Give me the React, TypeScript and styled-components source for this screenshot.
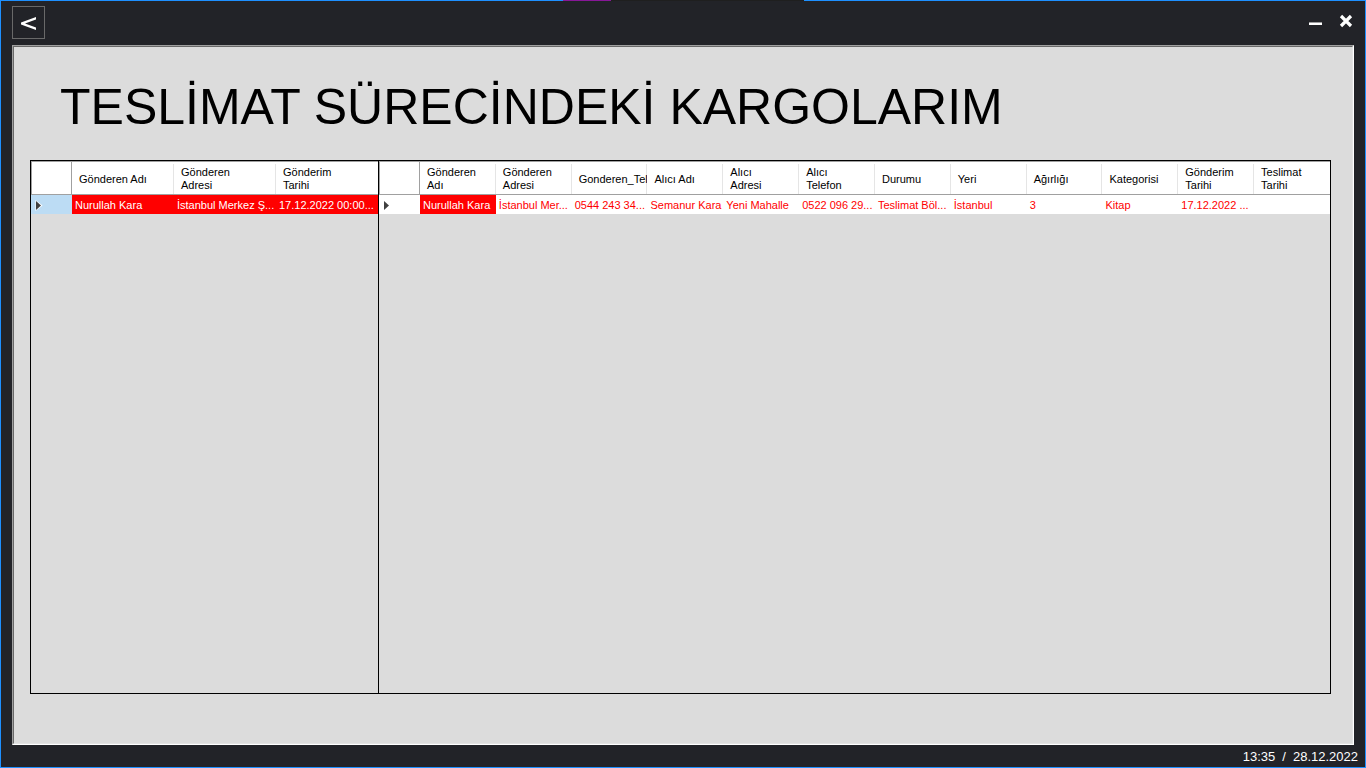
import React from "react";
import styled, { createGlobalStyle } from "styled-components";

const GlobalStyle = createGlobalStyle`
  * { box-sizing: border-box; }
  body {
    margin: 0;
    background: #222328;
    font-family: "Liberation Sans", Arial, sans-serif;
  }
`;

const Window = styled.div`
  display: flex;
  flex-direction: column;
  min-height: 100vh;
  background: #222328;
  border: 1px solid #1e90ff;
  border-top: 0;
`;

const AccentLine = styled.div`
  height: 1px;
  background: linear-gradient(
    to right,
    #1e90ff 41.2%,
    #881798 41.2% 44.7%,
    #1f1f1f 44.7% 58.9%,
    #1e90ff 58.9%
  );
`;

const TitleBar = styled.header`
  display: flex;
  justify-content: space-between;
  align-items: flex-start;
  height: 44px;
  padding: 5px 9px 0 11px;
`;

const BackButton = styled.button`
  display: flex;
  align-items: center;
  justify-content: center;
  width: 33px;
  height: 33px;
  padding: 2px 0 0;
  background: #222328;
  border: 1px solid #696969;
`;

const WindowControls = styled.div`
  display: flex;
  gap: 10px;
  padding-top: 5px;
`;

const ControlButton = styled.button`
  width: 20px;
  height: 20px;
  padding: 0;
  background: transparent;
  border: 0;

  svg { display: block; }
`;

const Panel = styled.main`
  flex: 1;
  display: flex;
  flex-direction: column;
  margin: 0 11px;
  background: #dcdcdc;
  border: 1px solid;
  border-color: #a0a0a0 #ffffff #ffffff #a0a0a0;
`;

const PanelInner = styled.div`
  flex: 1;
  display: flex;
  flex-direction: column;
  padding: 32px 21px 49px 16px;
  border: 1px solid;
  border-color: #696969 #e3e3e3 #e3e3e3 #696969;
`;

const Title = styled.h1`
  margin: 0;
  padding-left: 30px;
  height: 81px;
  font-size: 50px;
  line-height: 56px;
  font-weight: 400;
  color: #000;
  white-space: nowrap;
`;

const Grids = styled.div`
  flex: 1;
  display: grid;
  grid-template-columns: 347fr 952fr;
  border: 1px solid #000;
`;

const GridPane = styled.section`
  min-width: 0;

  & + & { border-left: 1px solid #000; }
`;

const Table = styled.table`
  width: 100%;
  table-layout: fixed;
  border-spacing: 0;
  font-size: 11px;
  line-height: 13px;
`;

const HeadCell = styled.th`
  height: 34px;
  padding: 2px 0 0 7px;
  overflow: hidden;
  text-align: left;
  font-weight: 400;
  color: #000;
  background: linear-gradient(#e5e5e5, #e5e5e5) right 2px / 1px 100% no-repeat #fff;
  border-top: 1px solid #a0a0a0;
  border-bottom: 1px solid #a0a0a0;
  white-space: pre;

  &:last-child { background: #fff; }
`;

const CornerCell = styled.td`
  width: 41px;
  background: #fff;
  border: 1px solid #a0a0a0;
`;

const RowMarker = styled.th<{ $active?: boolean }>`
  height: 19px;
  padding: 1px 0 0 4px;
  background: ${(p) => (p.$active ? "#bcdcf4" : "#fff")};

  svg { display: block; }
`;

const Cell = styled.td<{ $selected?: boolean }>`
  height: 19px;
  padding: 1px 0 0 3px;
  overflow: hidden;
  white-space: nowrap;
  color: ${(p) => (p.$selected ? "#fff" : "#f00")};
  background: ${(p) => (p.$selected ? "#f00" : "#fff")};
`;

const StatusBar = styled.footer`
  display: flex;
  justify-content: flex-end;
  gap: 7px;
  height: 22px;
  padding: 4px 7px 0;
  font-size: 13px;
  line-height: 16px;
  color: #fff;
`;

type GridProps = {
  label: string;
  columns: string[];
  values: string[];
  selectedCount: number;
  active?: boolean;
};

function DataGrid({ label, columns, values, selectedCount, active }: GridProps) {
  return (
    <GridPane>
      <Table aria-label={label}>
        <thead>
          <tr>
            <CornerCell />
            {columns.map((c) => (
              <HeadCell key={c} scope="col">{c}</HeadCell>
            ))}
          </tr>
        </thead>
        <tbody>
          <tr>
            <RowMarker scope="row" $active={active} aria-label="Seçili satır">
              <svg width="8" height="11" viewBox="0 0 8 11">
                <path d="M0.5 0 L7.5 5.5 L0.5 11 Z" fill="#fff" />
                <path d="M1 1 L6 5.5 L1 10 Z" fill="#404040" />
              </svg>
            </RowMarker>
            {values.map((v, i) => (
              <Cell key={columns[i]} $selected={i < selectedCount}>{v}</Cell>
            ))}
          </tr>
        </tbody>
      </Table>
    </GridPane>
  );
}

export default function App() {
  return (
    <>
      <GlobalStyle />
      <Window>
        <AccentLine />
        <TitleBar>
          <BackButton aria-label="Geri">
            <svg width="17" height="15" viewBox="0 0 17 15">
              <path d="M16 1 V3.4 L5 7.5 L16 11.6 V14 L1 8.4 V6.6 Z" fill="#fff" />
            </svg>
          </BackButton>
          <WindowControls>
            <ControlButton aria-label="Simge durumuna küçült">
              <svg width="20" height="20" viewBox="0 0 20 20">
                <path d="M3 11h13v1H3z" fill="#9a9a9c" />
                <path d="M3 12h13v2H3z" fill="#fff" />
              </svg>
            </ControlButton>
            <ControlButton aria-label="Kapat">
              <svg width="20" height="20" viewBox="0 0 20 20">
                <path d="M5 5 L15 15 M15 5 L5 15" stroke="#fff" strokeWidth="3.2" />
              </svg>
            </ControlButton>
          </WindowControls>
        </TitleBar>
        <Panel>
          <PanelInner>
            <Title>TESLİMAT SÜRECİNDEKİ KARGOLARIM</Title>
            <Grids>
              <DataGrid
                label="Gönderiler"
                active
                selectedCount={3}
                columns={["Gönderen Adı", "Gönderen\nAdresi", "Gönderim\nTarihi"]}
                values={["Nurullah Kara", "İstanbul Merkez Ş...", "17.12.2022 00:00..."]}
              />
              <DataGrid
                label="Kargo ayrıntıları"
                selectedCount={1}
                columns={[
                  "Gönderen\nAdı", "Gönderen\nAdresi", "Gonderen_Tel", "Alıcı Adı",
                  "Alıcı\nAdresi", "Alıcı\nTelefon", "Durumu", "Yeri", "Ağırlığı",
                  "Kategorisi", "Gönderim\nTarihi", "Teslimat\nTarihi",
                ]}
                values={[
                  "Nurullah Kara", "İstanbul Mer...", "0544 243 34...", "Semanur Kara",
                  "Yeni Mahalle", "0522 096 29...", "Teslimat Böl...", "İstanbul", "3",
                  "Kitap", "17.12.2022 ...", "",
                ]}
              />
            </Grids>
          </PanelInner>
        </Panel>
        <StatusBar>
          <span>13:35</span>
          <span>/</span>
          <span>28.12.2022</span>
        </StatusBar>
      </Window>
    </>
  );
}
